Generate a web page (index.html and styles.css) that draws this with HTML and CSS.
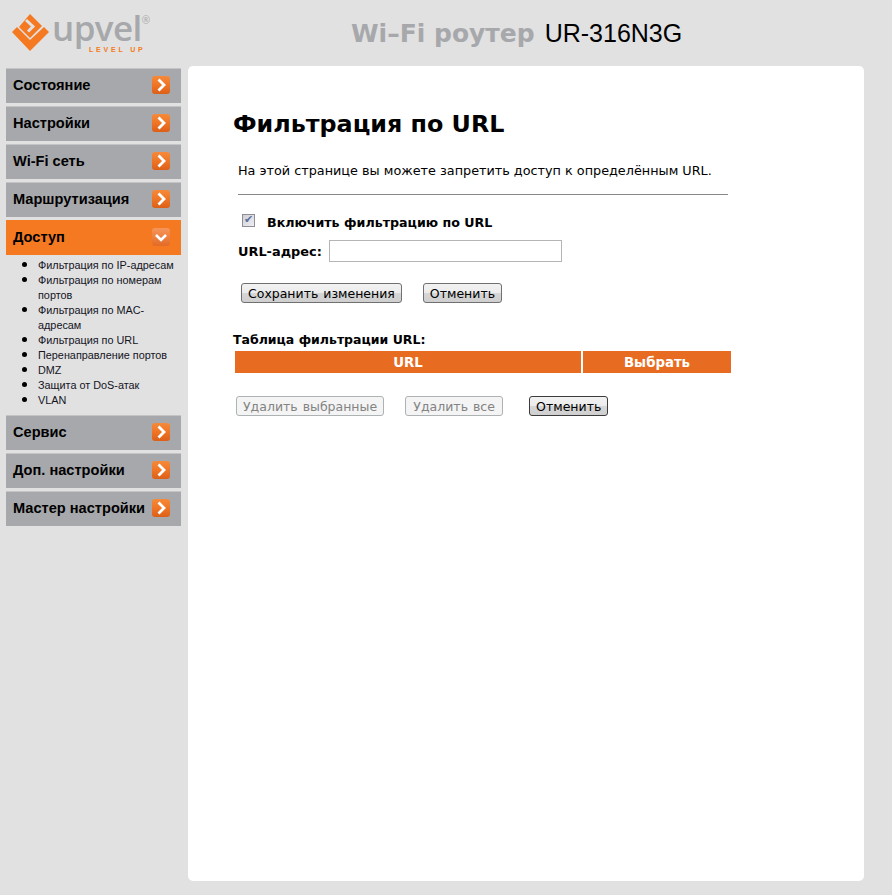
FILE: index.html
```html
<!DOCTYPE html>
<html lang="en">
<head>
    <meta charset="UTF-8">
    <title>Wi-Fi роутер UR-316N3G</title>
    <link rel="stylesheet" href="styles.css">
</head>
<body>
    <svg class="icons" width="0" height="0">
        <symbol id="chev-right" viewBox="0 0 18 18">
            <path d="M6.5 3.5 L12 9 L6.5 14.5" fill="none" stroke="#fff" stroke-width="2.8"/>
        </symbol>
        <symbol id="chev-down" viewBox="0 0 18 18">
            <path d="M4 7 L9 12 L14 7" fill="none" stroke="#fff" stroke-width="2.6"/>
        </symbol>
    </svg>

    <div class="header">
        <div class="logo">
            <svg class="logo-mark" width="38" height="38" viewBox="0 0 38 38">
                <path fill="#f47920" d="M0 18 L5 13 L18 26 L32 13 L37 18 L18 37 Z"/>
                <path fill="#f47920" d="M18 0 L30 12 L18 24 L7 13 Z"/>
                <path fill="none" stroke="#e1e1e1" stroke-width="3" d="M14 6 L21 12.5 L16 17.5"/>
            </svg>
            <div class="logo-text">
                <div class="logo-name">upvel<sup>®</sup></div>
                <div class="logo-tag">LEVEL UP</div>
            </div>
        </div>
        <div class="title"><span class="title-gray">Wi–Fi роутер</span> UR-316N3G</div>
    </div>

    <div class="wrap">
        <div class="sidebar">
            <a class="menu-item">Состояние <span class="arrow"><svg width="18" height="18"><use href="#chev-right"/></svg></span></a>
            <a class="menu-item">Настройки <span class="arrow"><svg width="18" height="18"><use href="#chev-right"/></svg></span></a>
            <a class="menu-item">Wi-Fi сеть <span class="arrow"><svg width="18" height="18"><use href="#chev-right"/></svg></span></a>
            <a class="menu-item">Маршрутизация <span class="arrow"><svg width="18" height="18"><use href="#chev-right"/></svg></span></a>
            <a class="menu-item active">Доступ <span class="arrow open"><svg width="18" height="18"><use href="#chev-down"/></svg></span></a>
            <ul class="submenu">
                <li>Фильтрация по IP-адресам</li>
                <li>Фильтрация по номерам портов</li>
                <li>Фильтрация по MAC-адресам</li>
                <li>Фильтрация по URL</li>
                <li>Перенаправление портов</li>
                <li>DMZ</li>
                <li>Защита от DoS-атак</li>
                <li>VLAN</li>
            </ul>
            <a class="menu-item">Сервис <span class="arrow"><svg width="18" height="18"><use href="#chev-right"/></svg></span></a>
            <a class="menu-item">Доп. настройки <span class="arrow"><svg width="18" height="18"><use href="#chev-right"/></svg></span></a>
            <a class="menu-item">Мастер настройки <span class="arrow"><svg width="18" height="18"><use href="#chev-right"/></svg></span></a>
        </div>

        <div class="content">
            <h1>Фильтрация по URL</h1>
            <p class="intro">На этой странице вы можете запретить доступ к определённым URL.</p>
            <hr>
            <form>
                <div class="check-row">
                    <input type="checkbox" id="enabled" checked>
                    <label for="enabled">Включить фильтрацию по URL</label>
                </div>
                <div class="url-row">
                    <label for="url">URL-адрес:</label>
                    <input type="text" id="url">
                </div>
                <div class="btn-row">
                    <button type="button" class="btn">Сохранить изменения</button>
                    <button type="button" class="btn">Отменить</button>
                </div>
                <div class="table-title">Таблица фильтрации URL:</div>
                <table>
                    <tr><th class="col-url">URL</th><th class="col-select">Выбрать</th></tr>
                </table>
                <div class="btn-row bottom">
                    <button type="button" class="btn" disabled>Удалить выбранные</button>
                    <button type="button" class="btn" disabled>Удалить все</button>
                    <button type="button" class="btn dark">Отменить</button>
                </div>
            </form>
        </div>
    </div>
</body>
</html>
```

FILE: styles.css
```css
body {
    margin: 0;
    background: #e1e1e1;
    font-family: "DejaVu Sans", Verdana, sans-serif;
    color: #000;
}
.icons {
    display: block;
}
.header {
    display: flex;
    height: 66px;
}
.logo {
    width: 188px;
    padding: 12px 0 0 12px;
    box-sizing: border-box;
    display: flex;
    gap: 2px;
}
.logo-mark {
    margin-top: 2px;
}
.logo-text {
    color: #a7a8ab;
}
.logo-name {
    font-family: "Open Sans", sans-serif;
    font-size: 35px;
    font-weight: 600;
    line-height: 32px;
    letter-spacing: -0.6px;
}
.logo-name sup {
    font-size: 10px;
    font-weight: 400;
    line-height: 0;
    vertical-align: 17px;
}
.logo-tag {
    font-family: "Liberation Sans", Arial, sans-serif;
    font-size: 7px;
    font-weight: bold;
    line-height: 8px;
    letter-spacing: 2.8px;
    color: #f47920;
    margin-top: 2px;
    padding-left: 37px;
}
.title {
    flex: 1;
    padding: 15px 0 0 163px;
    font-family: "Liberation Sans", Arial, sans-serif;
    font-size: 25px;
    line-height: 36px;
}
.title-gray {
    font-family: "DejaVu Sans", sans-serif;
    font-size: 25px;
    font-weight: bold;
    color: #a7a8ab;
    margin-right: 3px;
}
.wrap {
    display: flex;
    align-items: flex-start;
}
.sidebar {
    width: 175px;
    margin: 2px 7px 0 6px;
}
.menu-item {
    display: flex;
    justify-content: space-between;
    align-items: center;
    height: 35px;
    margin-bottom: 3px;
    padding: 0 11px 2px 7px;
    border-top: 1px solid #c4c4c6;
    box-sizing: border-box;
    background: #a7a8ab;
    font-family: "Liberation Sans", Arial, sans-serif;
    font-size: 14.6px;
    font-weight: bold;
    white-space: nowrap;
}
.menu-item.active {
    background: #f47920;
    border-top-color: #f47920;
    margin-bottom: 0;
}
.arrow {
    width: 18px;
    height: 18px;
    border-radius: 3px;
    background: linear-gradient(#f58a3a 0%, #ef7526 50%, #dc5f18 100%);
}
.arrow svg {
    display: block;
}
.arrow.open {
    background: linear-gradient(#f6965a 0%, #e46a26 100%);
}
.submenu {
    margin: 3px 0 7px;
    padding: 0 0 0 32px;
    list-style: none;
    font-family: "Liberation Sans", Arial, sans-serif;
    font-size: 10.85px;
    line-height: 15px;
    color: #14141e;
}
.submenu li {
    position: relative;
}
.submenu li::before {
    content: "";
    position: absolute;
    left: -16px;
    top: 4px;
    width: 5px;
    height: 5px;
    border-radius: 50%;
    background: #000;
}
.content {
    width: 676px;
    height: 815px;
    padding: 43px 0 0 45px;
    box-sizing: border-box;
    background: #fff;
    border-radius: 5px;
}
h1 {
    margin: 0;
    font-size: 23.8px;
    line-height: 30px;
}
.intro {
    margin: 23px 0 0 5px;
    font-size: 12.8px;
    line-height: 18px;
}
hr {
    width: 490px;
    margin: 14px 0 0 5px;
    border: 0;
    border-top: 1px solid #888;
}
.check-row {
    display: flex;
    align-items: center;
    margin: 19px 0 0 9px;
    font-size: 12.65px;
    font-weight: bold;
    height: 16px;
}
.check-row input {
    appearance: none;
    position: relative;
    width: 13px;
    height: 13px;
    margin: -4px 12px 0 0;
    border: 1px solid #8e8f94;
    background: linear-gradient(135deg, #cfd0d6 0%, #eeeef2 100%);
}
.check-row input:checked::before {
    content: "✔";
    position: absolute;
    left: 1px;
    top: -2px;
    font-size: 11px;
    font-weight: normal;
    color: #5f6f9e;
}
.url-row {
    display: flex;
    align-items: center;
    gap: 7px;
    margin: 10px 0 0 5px;
    font-size: 12.9px;
    font-weight: bold;
}
.url-row input {
    width: 233px;
    height: 22px;
    box-sizing: border-box;
    border: 1px solid #b5b5b5;
    padding: 0 3px;
}
.btn-row {
    display: flex;
    gap: 21px;
    margin: 21px 0 0 8px;
}
.btn {
    height: 20px;
    padding: 0 6px;
    box-sizing: border-box;
    border: 1px solid #707070;
    border-radius: 3px;
    background: linear-gradient(#f2f2f2 0%, #ebebeb 50%, #d6d6d6 51%, #cfcfcf 100%);
    font-family: "DejaVu Sans", sans-serif;
    font-size: 12.5px;
    word-spacing: 1px;
    color: #000;
}
.btn:disabled {
    border-color: #adb2b5;
    background: #f4f4f4;
    color: #838383;
}
.btn.dark {
    border-color: #3c3c3c;
}
.table-title {
    margin-top: 29px;
    font-size: 12.5px;
    font-weight: bold;
    line-height: 16px;
}
table {
    width: 500px;
    margin: 1px 0 0 0;
    border-collapse: separate;
    border-spacing: 2px;
}
th {
    height: 22px;
    padding: 0;
    background: #e76b21;
    color: #fff;
    font-size: 13.3px;
    text-align: center;
}
.col-url {
    width: 346px;
}
.btn-row.bottom {
    margin: 21px 0 0 3px;
    gap: 21px;
}
.btn-row.bottom .btn:nth-child(2) {
    width: 98px;
    margin-right: 5px;
}
```
